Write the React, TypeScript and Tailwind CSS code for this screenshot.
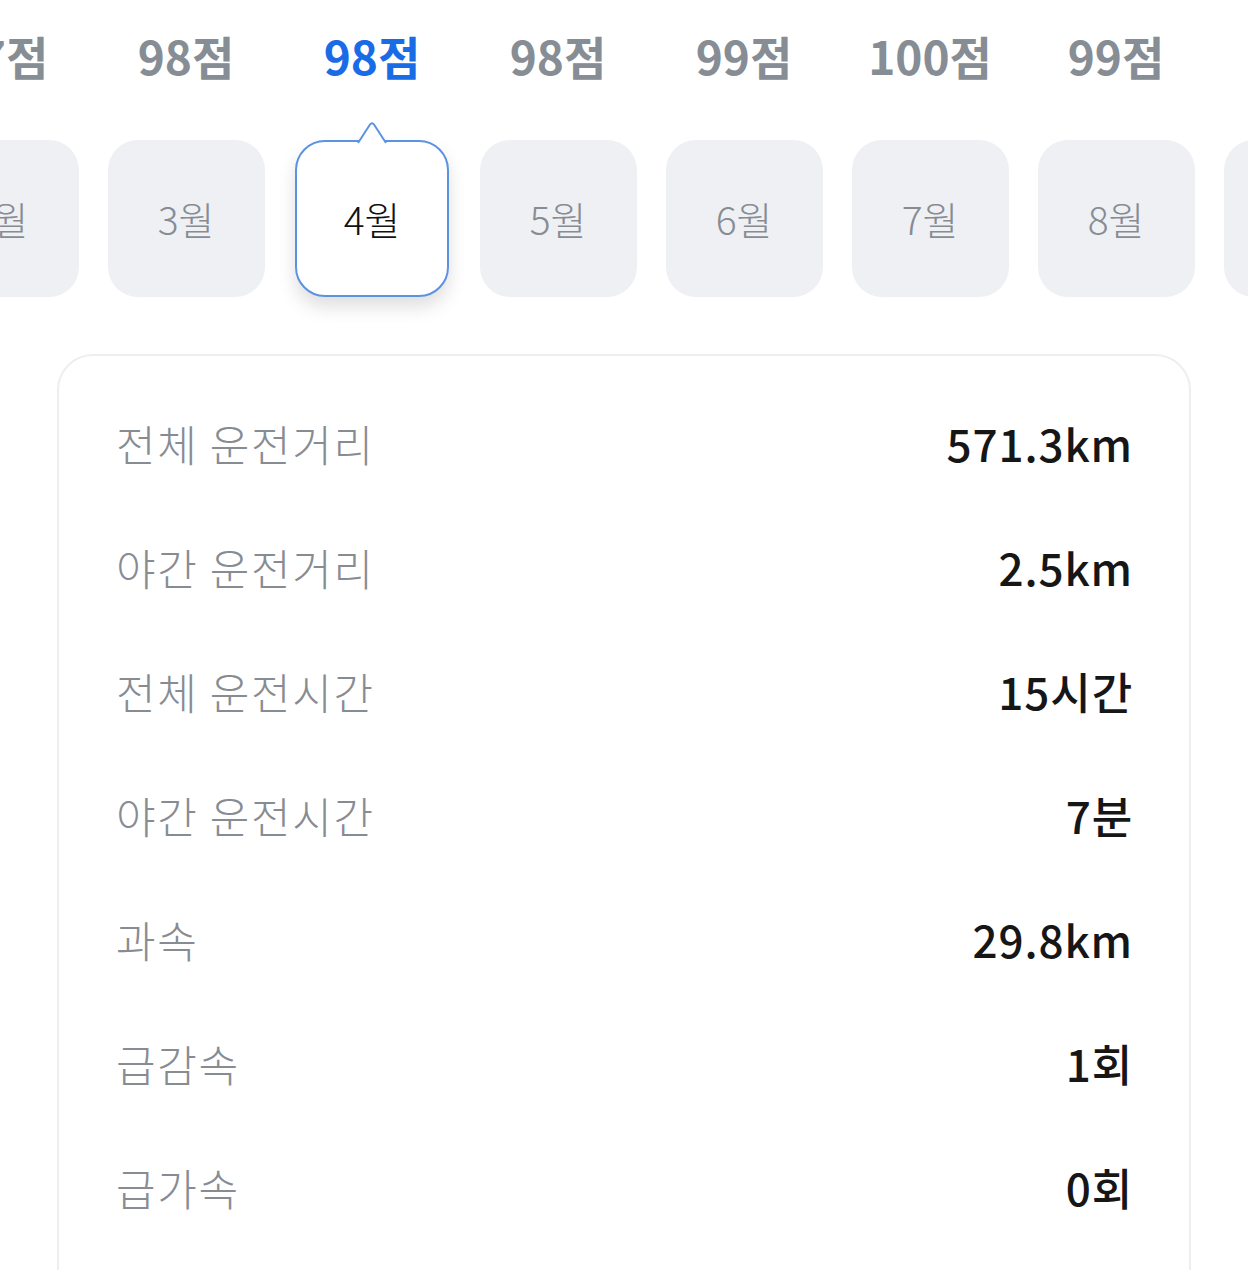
const scores = ['97점', '98점', '98점', '98점', '99점', '100점', '99점', '98점'];
const months = ['2월', '3월', '4월', '5월', '6월', '7월', '8월', '9월'];
const active = 2;

const stats = [
  { label: '전체 운전거리', value: '571.3km' },
  { label: '야간 운전거리', value: '2.5km' },
  { label: '전체 운전시간', value: '15시간' },
  { label: '야간 운전시간', value: '7분' },
  { label: '과속', value: '29.8km' },
  { label: '급감속', value: '1회' },
  { label: '급가속', value: '0회' },
];

const font = { fontFamily: '"Noto Sans CJK KR", "Noto Sans", sans-serif' };

export default function App() {
  return (
    <div className="w-[1248px] h-[1270px] overflow-hidden bg-white" style={font}>
      {/* month selector */}
      <div className="overflow-hidden">
        <div className="flex -ml-[93px]">
          {scores.map((s, i) => (
            <div
              key={i}
              className={`w-[186px] h-[110px] shrink-0 flex items-center justify-center text-[46px] font-bold ${
                i === active ? 'text-[#1a6be6]' : 'text-[#878d94]'
              }`}
            >
              {s}
            </div>
          ))}
        </div>
        <div className="flex -ml-[93px] mt-[30px] pb-[40px]">
          {months.map((m, i) => (
            <div key={i} className="w-[186px] shrink-0 flex justify-center">
              {i === active ? (
                <div className="relative w-[154px] h-[157px] rounded-[30px] border-2 border-[#5b93e2] bg-white flex items-center justify-center shadow-[0_10px_18px_rgba(0,0,0,0.13)]">
                  <svg
                    className="absolute left-1/2 -translate-x-1/2 -top-[21px]"
                    width="30"
                    height="23"
                    viewBox="0 0 30 23"
                  >
                    <path d="M1 22 L13 3.5 Q15 0.8 17 3.5 L29 22 Z" fill="#ffffff" />
                    <path
                      d="M1 22 L13 3.5 Q15 0.8 17 3.5 L29 22"
                      fill="none"
                      stroke="#5b93e2"
                      strokeWidth="2"
                      strokeLinejoin="round"
                    />
                  </svg>
                  <span className="text-[39px] font-light text-[#111111]">{m}</span>
                </div>
              ) : (
                <div className="w-[157px] h-[157px] rounded-[30px] bg-[#eef0f3] flex items-center justify-center">
                  <span className="text-[39px] font-light text-[#878c93]">{m}</span>
                </div>
              )}
            </div>
          ))}
        </div>
      </div>

      {/* stats card */}
      <div className="ml-[57px] mt-[17px] w-[1134px] rounded-[36px] border-2 border-[#eceef1] px-[57px] pt-[25px] pb-[60px]">
        {stats.map((row) => (
          <div key={row.label} className="h-[124px] flex items-center justify-between">
            <span className="text-[43px] font-light text-[#878c93] tracking-[0.04em]">{row.label}</span>
            <span className="text-[44px] font-medium text-[#161616] tracking-[0.02em] -mr-[1px]">{row.value}</span>
          </div>
        ))}
      </div>
    </div>
  );
}
